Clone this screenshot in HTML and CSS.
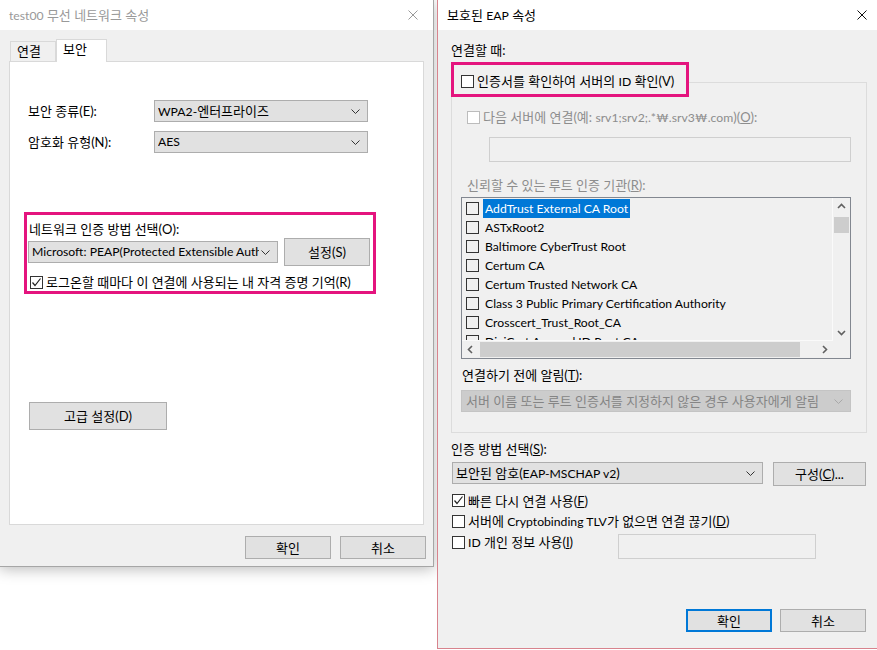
FILE: index.html
```html
<!DOCTYPE html>
<html lang="ko">
<head>
<meta charset="utf-8">
<title>EAP</title>
<link rel="stylesheet" href="styles.css">
</head>
<body>
<div class="win win-left">
  <div class="titlebar inactive">
    <span class="title"><span class="en">test00</span> 무선 네트워크 속성</span>
    <svg class="close" width="10" height="10" viewBox="0 0 10 10"><path d="M0.5 0.5L9.5 9.5M9.5 0.5L0.5 9.5" stroke="#999" stroke-width="1"/></svg>
  </div>
  <div class="body-left">
    <div class="tabs">
      <div class="tab">연결</div>
      <div class="tab active">보안</div>
    </div>
    <div class="panel">
      <div class="row first">
        <span class="lbl">보안 종류(E):</span>
        <div class="select w214"><span class="sel-text"><span class="en">WPA2-</span>엔터프라이즈</span><svg class="chev" width="9" height="5" viewBox="0 0 9 5"><path d="M0.5 0.5L4.5 4.5L8.5 0.5" fill="none" stroke="#333" stroke-width="1"/></svg></div>
      </div>
      <div class="row second">
        <span class="lbl">암호화 유형(N):</span>
        <div class="select w214"><span class="sel-text en">AES</span><svg class="chev" width="9" height="5" viewBox="0 0 9 5"><path d="M0.5 0.5L4.5 4.5L8.5 0.5" fill="none" stroke="#333" stroke-width="1"/></svg></div>
      </div>
      <div class="hl-box left-box">
        <div class="box-label">네트워크 인증 방법 선택(O):</div>
        <div class="box-row">
          <div class="select w250"><span class="sel-text clip en">Microsoft: PEAP(Protected Extensible Authentication Protocol)</span><svg class="chev" width="9" height="5" viewBox="0 0 9 5"><path d="M0.5 0.5L4.5 4.5L8.5 0.5" fill="none" stroke="#333" stroke-width="1"/></svg></div>
          <div class="btn btn-set">설정(S)</div>
        </div>
        <div class="check-row remember">
          <span class="cb"><svg width="11" height="11" viewBox="0 0 11 11"><path d="M1.5 5.5L4 8.5L9.5 1.5" fill="none" stroke="#222" stroke-width="1.2"/></svg></span>
          <span>로그온할 때마다 이 연결에 사용되는 내 자격 증명 기억(R)</span>
        </div>
      </div>
      <div class="btn btn-adv">고급 설정(D)</div>
    </div>
    <div class="footer">
      <div class="btn btn-foot">확인</div>
      <div class="btn btn-foot">취소</div>
    </div>
  </div>
</div>

<div class="win win-right">
  <div class="titlebar">
    <span class="title">보호된 <span class="en">EAP</span> 속성</span>
    <svg class="close" width="10" height="10" viewBox="0 0 10 10"><path d="M0.5 0.5L9.5 9.5M9.5 0.5L0.5 9.5" stroke="#111" stroke-width="1"/></svg>
  </div>
  <div class="body-right">
    <div class="txt">연결할 때:</div>
    <div class="hl-box verify-box">
      <span class="cb"></span>
      <span class="cb-text">인증서를 확인하여 서버의 <span class="en">ID</span> 확인(V)</span>
    </div>
    <div class="frame">
      <div class="check-row dis-row">
        <span class="cb dis"></span>
        <span class="dis-text">다음 서버에 연결(예: <span class="en">srv1;srv2;.*₩.srv3₩.com</span>)(<u>O</u>):</span>
      </div>
      <div class="input server-input"></div>
      <div class="dis-text trust-label">신뢰할 수 있는 루트 인증 기관(<u>R</u>):</div>
      <div class="listbox">
        <div class="items en">
          <div class="item"><span class="cb clear"></span><span class="it sel">AddTrust External CA Root</span></div>
          <div class="item"><span class="cb clear"></span><span class="it">ASTxRoot2</span></div>
          <div class="item"><span class="cb clear"></span><span class="it">Baltimore CyberTrust Root</span></div>
          <div class="item"><span class="cb clear"></span><span class="it">Certum CA</span></div>
          <div class="item"><span class="cb clear"></span><span class="it">Certum Trusted Network CA</span></div>
          <div class="item"><span class="cb clear"></span><span class="it">Class 3 Public Primary Certification Authority</span></div>
          <div class="item"><span class="cb clear"></span><span class="it">Crosscert_Trust_Root_CA</span></div>
          <div class="item"><span class="cb clear"></span><span class="it">DigiCert Assured ID Root CA</span></div>
        </div>
        <div class="vscroll">
          <svg class="sarrow" width="17" height="17" viewBox="0 0 17 17"><path d="M5 10L8.5 6.5L12 10" fill="none" stroke="#606060" stroke-width="1.6"/></svg>
          <div class="vthumb"></div>
          <svg class="sarrow down" width="17" height="17" viewBox="0 0 17 17"><path d="M5 7L8.5 10.5L12 7" fill="none" stroke="#606060" stroke-width="1.6"/></svg>
        </div>
        <div class="hscroll">
          <svg class="sarrow" width="17" height="17" viewBox="0 0 17 17"><path d="M10 5L6.5 8.5L10 12" fill="none" stroke="#606060" stroke-width="1.6"/></svg>
          <div class="hthumb"></div>
          <svg class="sarrow right" width="17" height="17" viewBox="0 0 17 17"><path d="M7 5L10.5 8.5L7 12" fill="none" stroke="#606060" stroke-width="1.6"/></svg>
        </div>
        <div class="corner"></div>
      </div>
      <div class="txt notify-label">연결하기 전에 알림(<u>T</u>):</div>
      <div class="select dis-select"><span class="sel-text">서버 이름 또는 루트 인증서를 지정하지 않은 경우 사용자에게 알림</span><svg class="chev" width="9" height="5" viewBox="0 0 9 5"><path d="M0.5 0.5L4.5 4.5L8.5 0.5" fill="none" stroke="#a8a8a8" stroke-width="1"/></svg></div>
    </div>
    <div class="txt auth-label">인증 방법 선택(<u>S</u>):</div>
    <div class="auth-row">
      <div class="select w311"><span class="sel-text">보안된 암호(<span class="en">EAP-MSCHAP v2</span>)</span><svg class="chev" width="9" height="5" viewBox="0 0 9 5"><path d="M0.5 0.5L4.5 4.5L8.5 0.5" fill="none" stroke="#333" stroke-width="1"/></svg></div>
      <div class="btn btn-conf">구성(<u>C</u>)...</div>
    </div>
    <div class="opt-row first-opt">
      <span class="cb"><svg width="11" height="11" viewBox="0 0 11 11"><path d="M1.5 5.5L4 8.5L9.5 1.5" fill="none" stroke="#222" stroke-width="1.2"/></svg></span>
      <span>빠른 다시 연결 사용(<u>F</u>)</span>
    </div>
    <div class="opt-row">
      <span class="cb"></span>
      <span>서버에 <span class="en">Cryptobinding TLV</span>가 없으면 연결 끊기(<u>D</u>)</span>
    </div>
    <div class="opt-row last-opt">
      <div class="opt-label"><span class="cb"></span><span><span class="en">ID</span> 개인 정보 사용(<u>I</u>)</span></div>
      <div class="input id-input"></div>
    </div>
    <div class="footer-right">
      <div class="btn btn-foot default">확인</div>
      <div class="btn btn-foot">취소</div>
    </div>
  </div>
</div>
</body>
</html>
```

FILE: styles.css
```css
* { box-sizing: border-box; }
html, body { margin: 0; padding: 0; }
body {
  width: 877px;
  height: 650px;
  overflow: hidden;
  position: relative;
  background: #ffffff;
  font-family: Lato, "Noto Sans CJK KR", sans-serif;
  font-size: 13px;
  line-height: 16px;
  color: #000;
}
.en { font-size: 12.2px; }
u { text-decoration: underline; text-underline-offset: 1px; }

/* windows on desktop */
.win {
  position: absolute;
  top: 0;
  display: flex;
  flex-direction: column;
  background: #f0f0f0;
}
.win-left {
  left: -1px;
  width: 435px;
  height: 567px;
  border: 1px solid #a6a6a6;
  border-top: none;
  box-shadow: 0 2px 14px rgba(0, 0, 0, 0.28);
  z-index: 1;
}
.win-right {
  left: 437px;
  width: 442px;
  height: 649px;
  border: 1px solid #d8838d;
  border-top: none;
  z-index: 2;
}

.titlebar {
  height: 30px;
  flex-shrink: 0;
  background: #fff;
  display: flex;
  align-items: center;
  justify-content: space-between;
}
.win-left .titlebar { padding: 0 15px 0 9px; }
.win-right .titlebar { padding: 0 11px 0 9px; }
.titlebar.inactive .title { color: #999999; }
.close { display: block; }

/* left dialog */
.body-left {
  flex: 1;
  display: flex;
  flex-direction: column;
  padding: 9px 7px 0 9px;
}
.tabs {
  display: flex;
  align-items: flex-end;
  height: 22px;
  margin-left: 1px;
}
.tab {
  height: 20px;
  line-height: 18px;
  padding: 0 0 0 6px;
  width: 46px;
  border: 1px solid #d9d9d9;
  border-bottom: none;
  background: #f0f0f0;
}
.tab.active {
  height: 23px;
  width: 51px;
  margin-bottom: -1px;
  background: #fff;
  position: relative;
  z-index: 2;
  line-height: 18px;
}
.panel {
  width: 415px;
  height: 464px;
  background: #fff;
  border: 1px solid #d9d9d9;
  padding-top: 38px;
  display: flex;
  flex-direction: column;
  align-items: flex-start;
}
.row {
  display: flex;
  align-items: center;
  height: 22px;
}
.row .lbl { width: 126px; margin-left: 18px; }
.row.second { margin-top: 9px; }

.select {
  height: 22px;
  background: #e1e1e1;
  border: 1px solid #adadad;
  display: flex;
  align-items: center;
  justify-content: space-between;
  padding: 0 7px 0 3px;
  white-space: nowrap;
}
.sel-text { overflow: hidden; white-space: nowrap; }
.sel-text.clip { width: 227px; }
.chev { flex-shrink: 0; display: block; }
.w214 { width: 214px; }
.w250 { width: 250px; }
.w311 { width: 311px; }

.hl-box {
  border: 3px solid #e4147e;
}
.left-box {
  margin-top: 59px;
  margin-left: 14px;
  width: 352px;
  padding: 6px 0 1px 0;
}
.box-label { margin-left: 2px; line-height: 16px; }
.box-row {
  display: flex;
  align-items: center;
  height: 28px;
  margin-top: 1px;
  margin-left: 1px;
  gap: 6px;
}
.btn {
  background: #e1e1e1;
  border: 1px solid #adadad;
  display: flex;
  align-items: center;
  justify-content: center;
  white-space: nowrap;
}
.btn-set { width: 86px; height: 28px; }
.check-row {
  display: flex;
  align-items: center;
  height: 16px;
  gap: 3px;
}
.remember { margin-top: 8px; margin-left: 3px; }
.cb {
  width: 13px;
  height: 13px;
  border: 1px solid #333;
  background: #fff;
  flex-shrink: 0;
  display: flex;
  align-items: center;
  justify-content: center;
}
.cb svg { display: block; }
.btn-adv {
  width: 138px;
  height: 28px;
  margin-top: 108px;
  margin-left: 19px;
}
.footer {
  display: flex;
  justify-content: flex-end;
  gap: 9px;
  margin-top: 11px;
}
.btn-foot { width: 86px; height: 23px; }

/* right dialog */
.body-right {
  flex: 1;
  display: flex;
  flex-direction: column;
  align-items: flex-start;
  padding: 12px 11px 16px 13px;
}
.txt { line-height: 16px; }
.verify-box {
  margin-top: 4px;
  width: 238px;
  height: 35px;
  background: #f0f0f0;
  position: relative;
  z-index: 1;
  display: flex;
  align-items: center;
  padding: 3px 0 0 7px;
  gap: 3px;
}
.frame {
  margin-top: -15px;
  width: 416px;
  border: 1px solid #dcdcdc;
  padding: 26px 0 20px 0;
  display: flex;
  flex-direction: column;
  align-items: flex-start;
}
.dis-row { margin-left: 15px; }
.cb.dis { border-color: #bcbcbc; background: #fff; }
.dis-text { color: #8d8d8d; }
.server-input {
  margin: 12px 0 0 37px;
  width: 362px;
  height: 25px;
}
.input {
  background: #f0f0f0;
  border: 1px solid #cfcfcf;
}
.trust-label { margin: 15px 0 0 15px; line-height: 16px; }
.listbox {
  margin: 4px 0 0 9px;
  width: 390px;
  height: 162px;
  border: 1px solid #828790;
  background: #f0f0f0;
  display: grid;
  grid-template-columns: 1fr 17px;
  grid-template-rows: 1fr 17px;
}
.items {
  overflow: hidden;
  padding-top: 1px;
  border-right: 1px solid #fafafa;
  border-bottom: 1px solid #fafafa;
}
.item {
  display: flex;
  align-items: center;
  height: 19px;
  padding-left: 4px;
  white-space: nowrap;
}
.cb.clear { background: transparent; }
.it { margin-left: 4px; padding: 0 2px; line-height: 19px; height: 19px; }
.it.sel { background: #0078d7; color: #fff; }
.vscroll {
  display: flex;
  flex-direction: column;
  align-items: center;
}
.sarrow { display: block; flex-shrink: 0; }
.vthumb { width: 15px; height: 16px; background: #cdcdcd; margin-top: 2px; }
.vscroll .down { margin-top: auto; }
.hscroll {
  display: flex;
  align-items: center;
}
.hthumb { width: 320px; height: 15px; background: #cdcdcd; margin-left: 1px; }
.hscroll .right { margin-left: auto; }
.corner { background: #f0f0f0; }
.notify-label { margin: 8px 0 0 10px; }
.dis-select {
  margin: 7px 0 0 9px;
  width: 390px;
  background: #cccccc;
  border-color: #c4c4c4;
  color: #858585;
  padding-left: 4px;
}
.auth-label { margin-top: 8px; }
.auth-row {
  display: flex;
  align-items: flex-start;
  margin-top: 5px;
  margin-left: 1px;
  gap: 10px;
}
.btn-conf { width: 93px; height: 24px; }
.opt-row {
  display: flex;
  align-items: center;
  height: 21px;
  gap: 3px;
  margin-left: 1px;
}
.first-opt { margin-top: 4px; }
.last-opt { align-items: flex-start; height: auto; }
.opt-label {
  display: flex;
  align-items: center;
  gap: 3px;
  width: 166px;
  height: 21px;
}
.id-input { width: 198px; height: 25px; margin-top: 2px; margin-left: -3px; }
.footer-right {
  margin-top: auto;
  align-self: stretch;
  display: flex;
  justify-content: flex-end;
  gap: 8px;
  padding-right: 1px;
}
.btn.default { border: 2px solid #0078d7; }
```
